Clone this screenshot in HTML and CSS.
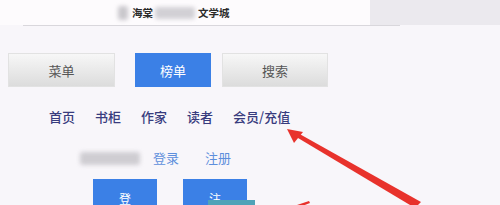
FILE: index.html
```html
<!DOCTYPE html>
<html lang="zh">
<head>
<meta charset="utf-8">
<link rel="stylesheet" href="styles.css">
</head>
<body>
<div class="page">
  <header class="top">
    <div class="brand">
      <span class="blob blob-a"></span>
      <span class="brand-txt">海棠</span>
      <span class="blob blob-b"></span>
      <span class="brand-txt">文学城</span>
    </div>
    <div class="top-side"></div>
  </header>
  <div class="rule"></div>

  <div class="tabs">
    <div class="btn btn-grey btn-menu">菜单</div>
    <div class="btn btn-blue btn-rank">榜单</div>
    <div class="btn btn-grey btn-search">搜索</div>
  </div>

  <nav class="nav">
    <span>首页</span>
    <span>书柜</span>
    <span>作家</span>
    <span>读者</span>
    <span>会员/充值</span>
  </nav>

  <div class="login">
    <span class="blob blob-c"></span>
    <span class="link">登录</span>
    <span class="link">注册</span>
  </div>

  <div class="actions">
    <div class="btn btn-blue act">登</div>
    <div class="btn btn-blue act">注</div>
  </div>

  <div class="teal"></div>

  <svg class="arrow" width="500" height="205" viewBox="0 0 500 205">
    <polygon points="293,135 296,132 421,202 415,208" fill="#e8322c"/>
    <polygon points="287,129 303,132 294,143" fill="#e8322c"/>
    <polygon points="294,206 309,201 310,203 297,208" fill="#e8322c"/>
  </svg>
</div>
</body>
</html>
```

FILE: styles.css
```css
html, body {
  margin: 0;
  padding: 0;
}
body {
  width: 500px;
  height: 205px;
  overflow: hidden;
  background: #f8f6fa;
  font-family: "Noto Sans CJK SC", "Noto Sans", sans-serif;
}
.page {
  position: relative;
  width: 500px;
  height: 205px;
  overflow: hidden;
}
.top {
  display: flex;
  height: 25px;
  background: #fdfbfd;
}
.brand {
  flex: 1;
  display: flex;
  align-items: center;
  padding-left: 118px;
  font-size: 10.5px;
  font-weight: bold;
  color: #2a2a2a;
}
.brand-txt {
  line-height: 14px;
}
.blob {
  display: inline-block;
  background: #c9c7cc;
  filter: blur(2px);
  border-radius: 3px;
}
.blob-a {
  width: 10px;
  height: 14px;
  margin-right: 4px;
}
.blob-b {
  width: 40px;
  height: 12px;
  margin: 0 3px 0 2px;
  background: #d2d0d5;
}
.top-side {
  width: 130px;
  background: #ebe9ee;
}
.rule {
  margin-left: 23px;
  width: 377px;
  height: 1px;
  background: #d9d7dc;
}
.tabs {
  display: flex;
  margin-top: 27px;
  padding-left: 8px;
}
.btn {
  display: flex;
  align-items: center;
  justify-content: center;
  height: 34px;
  font-size: 13px;
  box-sizing: border-box;
}
.btn-grey {
  background: linear-gradient(#f7f7f7, #dcdcdc);
  border: 1px solid #e2e2e2;
  color: #555;
}
.btn-blue {
  background: #3b80e6;
  color: #fff;
}
.btn-menu {
  width: 107px;
}
.btn-rank {
  width: 76px;
  margin-left: 20px;
}
.btn-search {
  width: 106px;
  margin-left: 11px;
}
.nav {
  display: flex;
  gap: 20px;
  margin-top: 21px;
  padding-left: 49px;
  font-size: 13px;
  font-weight: 500;
  line-height: 18px;
  color: #383c7e;
}
.login {
  display: flex;
  align-items: center;
  margin-top: 23px;
  padding-left: 80px;
  font-size: 13px;
  line-height: 18px;
}
.blob-c {
  width: 60px;
  height: 13px;
  margin-right: 13px;
  background: #cfcdd2;
}
.link {
  color: #5e8fdc;
  margin-right: 26px;
}
.actions {
  display: flex;
  gap: 26px;
  margin-top: 12px;
  padding-left: 93px;
}
.act {
  width: 64px;
  align-items: flex-start;
  padding-top: 13px;
  font-size: 12px;
  line-height: 14px;
}
.teal {
  position: absolute;
  left: 208px;
  top: 200px;
  width: 47px;
  height: 5px;
  background: #4fa3b8;
}
.arrow {
  position: absolute;
  left: 0;
  top: 0;
}
```
